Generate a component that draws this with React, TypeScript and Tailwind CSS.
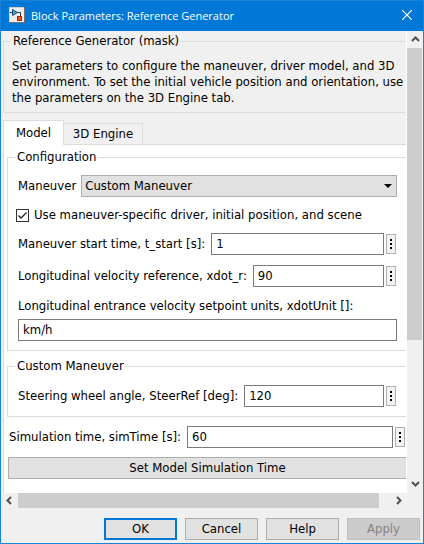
import { useState, type ReactNode } from 'react';

const field =
  'h-[22px] min-w-0 grow border border-[#7a7a7a] bg-white px-1 pb-0.5 outline-none';

function Group({ title, className, children }: { title: string; className: string; children: ReactNode }) {
  return (
    <fieldset className={`min-w-0 border border-r-0 border-[#dcdcdc] ${className}`}>
      <legend className="h-4 px-0.5 leading-4">{title}</legend>
      {children}
    </fieldset>
  );
}

function MoreButton({ label }: { label: string }) {
  return (
    <button
      type="button"
      aria-label={label}
      className="ml-0.5 flex h-5 w-2.5 shrink-0 flex-col items-center justify-center gap-[2px] border border-[#adadad] bg-[#f4f4f4]"
    >
      <span className="size-[2px] bg-black" />
      <span className="size-[2px] bg-black" />
      <span className="size-[2px] bg-black" />
    </button>
  );
}

function ParamRow({ id, label, value, className = '' }: { id: string; label: string; value: string; className?: string }) {
  return (
    <div className={`flex items-center ${className}`}>
      <label htmlFor={id} className="mr-1.5 shrink-0 whitespace-nowrap">{label}</label>
      <input id={id} type="text" defaultValue={value} className={field} />
      <MoreButton label={`${label} options`} />
    </div>
  );
}

function Chevron({ d, label, className }: { d: string; label: string; className: string }) {
  return (
    <button type="button" aria-label={label} className={`flex shrink-0 items-center justify-center ${className}`}>
      <svg width="9" height="9" viewBox="0 0 9 9" fill="none" stroke="#505050" strokeWidth="2">
        <path d={d} />
      </svg>
    </button>
  );
}

const dialogButton = 'h-[22px] w-[73px] border border-[#adadad] bg-[#e1e1e1]';

export default function App() {
  const [specific, setSpecific] = useState(true);
  return (
    <main className="flex min-h-screen flex-col border border-[#1883d7] bg-[#f0f0f0] font-['DejaVu_Sans_Condensed','DejaVu_Sans',sans-serif] text-[13px] leading-4 text-black">
      <header className="flex h-[30px] items-center bg-[#0078d7] pr-2 pl-2 font-['Open_Sans','Noto_Sans',sans-serif] text-[11px] text-white">
        <svg width="16" height="16" viewBox="0 0 16 16" className="mr-[6px] mb-0.5 shrink-0">
          <rect x="0.5" y="0.5" width="15" height="15" fill="#ececec" stroke="#d4cfc8" />
          <path d="M0 15.5H16M15.5 0V16" stroke="#77706a" />
          <path d="M1 5.5H3M8 5.5H11.5V9" stroke="#333" fill="none" />
          <path d="M3.5 2.5V8.5L8.5 5.5Z" fill="#4b9fc6" stroke="#17516f" />
          <rect x="8.5" y="9.5" width="4" height="4" fill="#e2561c" stroke="#a03008" />
        </svg>
        <h1 className="grow truncate">Block Parameters: Reference Generator</h1>
        <button type="button" aria-label="Close" className="mb-0.5 flex size-4 items-center justify-center">
          <svg width="10" height="10" viewBox="0 0 10 10" stroke="white" strokeWidth="1.2">
            <path d="M0 0L10 10M10 0L0 10" />
          </svg>
        </button>
      </header>

      <div className="flex">
        <div className="flex min-w-0 grow flex-col border-r border-white">
          <div className="min-w-0 pt-0.5 pl-0.5">
            <Group title="Reference Generator (mask)" className="pb-1.5 pl-[7px]">
              <p className="pt-[9px] pl-px">
                Set parameters to configure the maneuver, driver model, and 3D environment. To set the initial vehicle
                position and orientation, use the parameters on the 3D Engine tab.
              </p>
            </Group>
          </div>

          <div role="tablist" className="mt-[7px] flex items-end pl-0.5">
            <button
              type="button"
              role="tab"
              aria-selected="true"
              className="z-10 -mb-px h-[25px] w-[61px] border border-b-0 border-[#dcdcdc] bg-white"
            >
              Model
            </button>
            <button
              type="button"
              role="tab"
              aria-selected="false"
              className="h-[21px] w-[79px] border border-b-0 border-l-0 border-[#dcdcdc]"
            >
              3D Engine
            </button>
          </div>

          <div role="tabpanel" className="ml-0.5 border-t border-l border-[#dcdcdc] bg-white pt-1 pb-3.5 pl-[3px]">
            <Group title="Configuration" className="pb-[9px] pl-[7px]">
              <div className="mt-[10px] mr-[9px] ml-[3px] flex items-center">
                <label htmlFor="maneuver" className="mr-[5px] shrink-0">Maneuver</label>
                <div className="relative min-w-0 grow">
                  <select id="maneuver" className="block h-[22px] w-full appearance-none border border-[#adadad] bg-[#e1e1e1] px-[3px]">
                    <option>Custom Maneuver</option>
                  </select>
                  <svg width="8" height="4" viewBox="0 0 8 4" className="pointer-events-none absolute top-[9px] right-[5px]">
                    <path d="M0 0H8L4 4Z" fill="black" />
                  </svg>
                </div>
              </div>
              <label className="mt-2.5 flex items-center">
                <span className="relative ml-px size-[13px] shrink-0">
                  <input
                    type="checkbox"
                    checked={specific}
                    onChange={(e) => setSpecific(e.target.checked)}
                    className="block size-[13px] appearance-none border border-[#333] bg-white"
                  />
                  {specific && (
                    <svg width="13" height="13" viewBox="0 0 13 13" className="pointer-events-none absolute inset-0">
                      <path d="M2.5 6.5L5 9L10.5 3.5" fill="none" stroke="#222" strokeWidth="1.3" />
                    </svg>
                  )}
                </span>
                <span className="ml-[5px] whitespace-nowrap">Use maneuver-specific driver, initial position, and scene</span>
              </label>
              <ParamRow id="tstart" label="Maneuver start time, t_start [s]:" value="1" className="mt-[10px] mr-[10px] ml-[3px]" />
              <ParamRow id="xdot" label="Longitudinal velocity reference, xdot_r:" value="90" className="mt-[10px] mr-[10px] ml-[3px]" />
              <div className="mt-[11px] mr-[9px] ml-[3px] flex flex-col">
                <label htmlFor="unit" className="whitespace-nowrap">Longitudinal entrance velocity setpoint units, xdotUnit []:</label>
                <input id="unit" type="text" defaultValue="km/h" className={`${field} mt-[5px] shrink-0`} />
              </div>
            </Group>

            <Group title="Custom Maneuver" className="mt-[7px] pb-[9px] pl-[7px]">
              <ParamRow id="steer" label="Steering wheel angle, SteerRef [deg]:" value="120" className="mt-[11px] mr-[10px] ml-[3px]" />
            </Group>

            <ParamRow id="sim" label="Simulation time, simTime [s]:" value="60" className="mt-[9px] mr-px ml-0.5" />
            <div className="mt-[9px] flex pl-px">
              <button type="button" className="h-[22px] grow border border-r-0 border-[#adadad] bg-[#e1e1e1]">
                Set Model Simulation Time
              </button>
            </div>
          </div>
        </div>

        <div className="flex w-4 shrink-0 flex-col">
          <Chevron d="M1 6L4.5 2.5L8 6" label="Scroll up" className="h-[17px]" />
          <div className="mr-px basis-[292px] bg-[#cdcdcd]" />
          <div className="grow" />
          <Chevron d="M1 3L4.5 6.5L8 3" label="Scroll down" className="h-[19px]" />
        </div>
      </div>

      <div className="mr-4 flex h-[15px]">
        <Chevron d="M6 1L2.5 4.5L6 8" label="Scroll left" className="w-[17px]" />
        <div className="grow bg-[#cdcdcd]" />
        <div className="w-[11px]" />
        <Chevron d="M3 1L6.5 4.5L3 8" label="Scroll right" className="w-[17px]" />
      </div>

      <footer className="flex justify-end gap-2 px-[3px] pt-2.5 pb-0.5">
        <button type="button" className="h-[22px] w-[73px] border-2 border-[#0078d7] bg-[#e1e1e1]">OK</button>
        <button type="button" className={dialogButton}>Cancel</button>
        <button type="button" className={dialogButton}>Help</button>
        <button type="button" disabled className="h-[22px] w-[73px] border border-[#bfbfbf] bg-[#cccccc] text-[#838383]">Apply</button>
      </footer>
    </main>
  );
}
